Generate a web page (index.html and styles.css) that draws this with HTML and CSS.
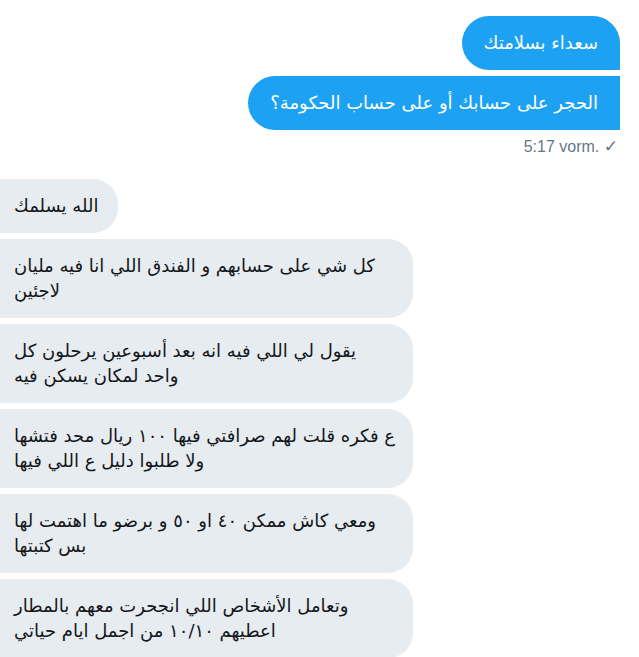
FILE: index.html
```html
<!DOCTYPE html>
<html lang="ar">
<head>
  <meta charset="UTF-8">
  <meta name="viewport" content="width=device-width, initial-scale=1.0">
  <title>Nachrichten</title>
  <link rel="stylesheet" href="styles.css">
</head>
<body>
  <div id="conversation">
    <div class="group sent">
      <div class="bubble first">سعداء بسلامتك</div>
      <div class="bubble">الحجر على حسابك أو على حساب الحكومة؟</div>
      <div class="meta">5:17 vorm. <span class="check">✓</span></div>
    </div>

    <div class="group received">
      <div class="bubble short">الله يسلمك</div>
      <div class="bubble">كل شي على حسابهم و الفندق اللي انا فيه مليان<br>لاجئين</div>
      <div class="bubble">يقول لي اللي فيه انه بعد أسبوعين يرحلون كل<br>واحد لمكان يسكن فيه</div>
      <div class="bubble">ع فكره قلت لهم صرافتي فيها ١٠٠ ريال محد فتشها<br>ولا طلبوا دليل ع اللي فيها</div>
      <div class="bubble">ومعي كاش ممكن ٤٠ او ٥٠ و برضو ما اهتمت لها<br>بس كتبتها</div>
      <div class="bubble">وتعامل الأشخاص اللي انجحرت معهم بالمطار<br>اعطيهم ١٠/١٠ من اجمل ايام حياتي</div>
    </div>
  </div>
</body>
</html>
```

FILE: styles.css
```css
html, body {
    margin: 0;
    padding: 0;
    background: #fff;
}
#conversation {
    width: 639px;
    height: 657px;
    overflow: hidden;
    padding-top: 16px;
    box-sizing: border-box;
    font-family: "DejaVu Sans", "Noto Sans", sans-serif;
    font-size: 18px;
    color: #14171a;
}
.group {
    display: flex;
    flex-direction: column;
    gap: 6px;
}
.bubble {
    line-height: 25px;
    padding: 14px 20px 15px 14px;
    box-sizing: border-box;
    white-space: nowrap;
}

/* outgoing messages, right column */
.sent {
    align-items: flex-end;
    padding-right: 19px;
}
.sent .bubble {
    background: #1da1f2;
    color: #fff;
    padding: 14px 22px 15px 22px;
    border-radius: 27px 0 0 27px;
}
.sent .bubble.first {
    border-top-right-radius: 27px;
}
.meta {
    margin-top: 1px;
    margin-right: 2px;
    font-family: "Liberation Sans", Arial, sans-serif;
    font-size: 16px;
    color: #657786;
    line-height: 18px;
}
.check {
    font-family: "DejaVu Sans", sans-serif;
    font-size: 17px;
}

/* incoming messages, left edge is cut by the window */
.received {
    align-items: flex-start;
    margin-top: 23px;
}
.received .bubble {
    background: #e6ecf0;
    width: 413px;
    border-radius: 0 25px 25px 0;
}
.received .bubble.short {
    width: auto;
}
```
